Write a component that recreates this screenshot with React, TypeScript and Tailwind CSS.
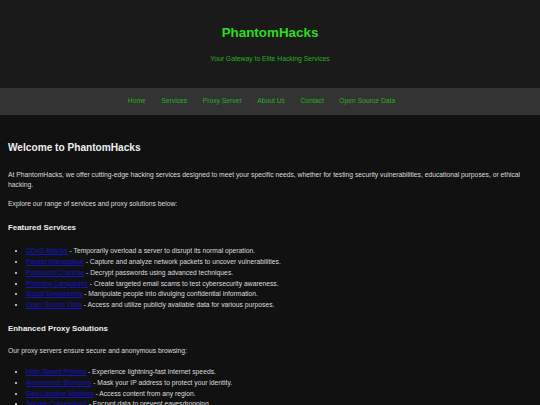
import React from "react";

const services = [
  ["DDoS Attacks", "Temporarily overload a server to disrupt its normal operation."],
  ["Packet Interception", "Capture and analyze network packets to uncover vulnerabilities."],
  ["Password Cracking", "Decrypt passwords using advanced techniques."],
  ["Phishing Campaigns", "Create targeted email scams to test cybersecurity awareness."],
  ["Social Engineering", "Manipulate people into divulging confidential information."],
  ["Open Source Data", "Access and utilize publicly available data for various purposes."],
];

const proxies = [
  ["High-Speed Proxies", "Experience lightning-fast internet speeds."],
  ["Anonymous Browsing", "Mask your IP address to protect your identity."],
  ["Geo-Location Masking", "Access content from any region."],
  ["Secure Connections", "Encrypt data to prevent eavesdropping."],
];

const nav = ["Home", "Services", "Proxy Server", "About Us", "Contact", "Open Source Data"];

function List({ items }: { items: string[][] }) {
  return (
    <ul className="list-disc pl-[18px] text-[#dcdcdc]">
      {items.map(([a, b]) => (
        <li key={a} className="leading-[10.75px] marker:text-[#e8e8e8]">
          <a href="#" className="text-[#1414c4] underline">
            {a}
          </a>{" "}
          - {b}
        </li>
      ))}
    </ul>
  );
}

export default function App() {
  return (
    <div
      className="w-[540px] h-[405px] overflow-hidden bg-[#111111] text-[6.75px]"
      style={{ fontFamily: '"Liberation Sans", Arial, sans-serif' }}
    >
      <header className="h-[88px] bg-[#1a1a1a] flex flex-col items-center">
        <h1 className="mt-[24px] text-[13.4px] leading-[18px] font-bold text-[#2ddc1c]">PhantomHacks</h1>
        <p className="mt-[12px] text-[6.8px] leading-[10px] text-[#27b01c]">Your Gateway to Elite Hacking Services</p>
      </header>
      <nav className="h-[27px] bg-[#333333] flex items-center justify-center gap-[15.5px] pr-[17px]">
        {nav.map((n) => (
          <a key={n} href="#" className="text-[6.75px] text-[#27b01c]">
            {n}
          </a>
        ))}
      </nav>
      <main className="px-[8px]">
        <h2 className="mt-[25px] text-[10.15px] leading-[16px] font-bold text-[#eeeeee]">Welcome to PhantomHacks</h2>
        <p className="mt-[14px] leading-[9.6px] text-[#dcdcdc]">
          At PhantomHacks, we offer cutting-edge hacking services designed to meet your specific needs, whether for testing
          security vulnerabilities, educational purposes, or ethical hacking.
        </p>
        <p className="mt-[10px] leading-[10.4px] text-[#dcdcdc]">Explore our range of services and proxy solutions below:</p>
        <h3 className="mt-[12px] text-[7.9px] leading-[12px] font-bold text-[#eeeeee]">Featured Services</h3>
        <div className="mt-[12.8px]">
          <List items={services} />
        </div>
        <h3 className="mt-[11.7px] text-[7.9px] leading-[12px] font-bold text-[#eeeeee]">Enhanced Proxy Solutions</h3>
        <p className="mt-[11.8px] leading-[10.4px] text-[#dcdcdc]">Our proxy servers ensure secure and anonymous browsing:</p>
        <div className="mt-[10.4px]">
          <List items={proxies} />
        </div>
      </main>
    </div>
  );
}
